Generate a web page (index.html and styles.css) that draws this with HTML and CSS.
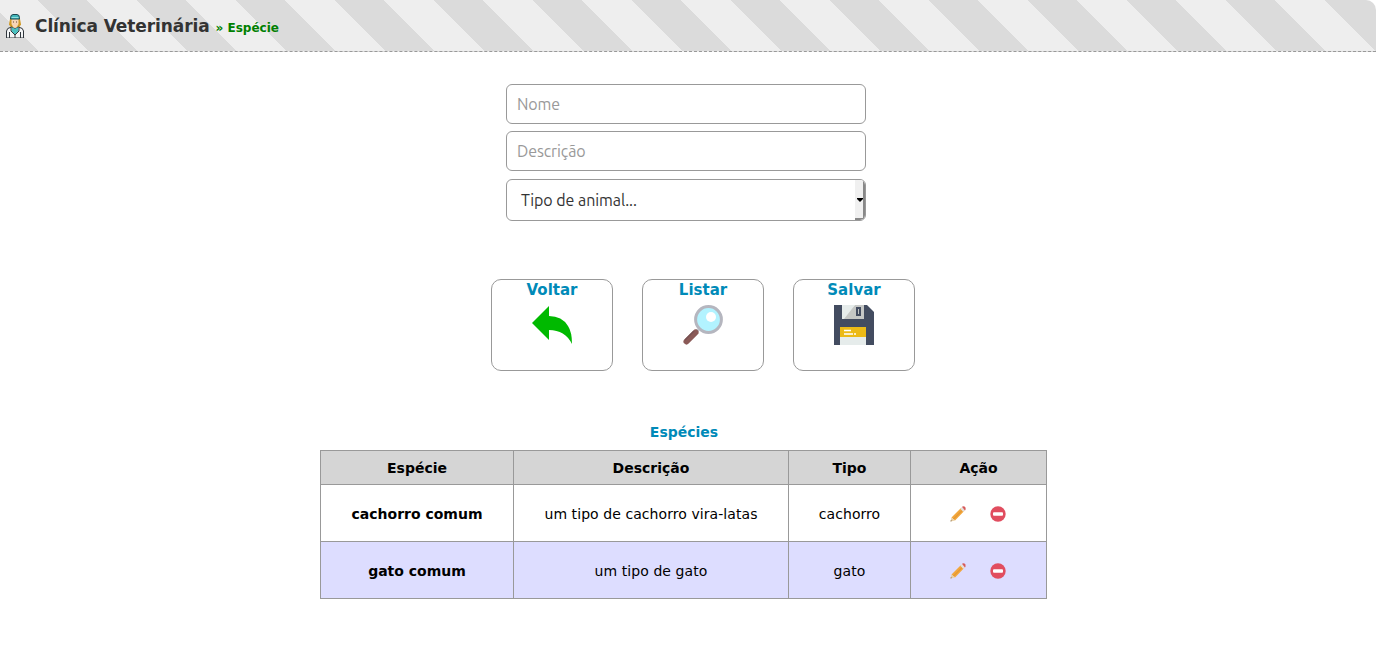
FILE: index.html
```html
<!DOCTYPE html>
<html lang="pt-BR">
<head>
<meta charset="utf-8">
<title>Clínica Veterinária</title>
<link rel="stylesheet" href="styles.css">
</head>
<body>
<svg class="sprites" aria-hidden="true">
  <symbol id="pencil" viewBox="0 0 16 16">
    <path d="M1.500 11.500L11 2l3.200 3L5 14.500z" fill="#f2a63b"/>
    <path d="M3.500 13l9.500-9.500" stroke="#dc9030" stroke-width="1"/>
    <path d="M.5 15.500l1-4 3.500 3z" fill="#e8cfa4"/>
    <path d="M.5 15.500l.4-1.600 1.200 1.200z" fill="#8b7355"/>
    <path d="M10.200 2.800l2-2 3.200 3.200-2 1.900z" fill="#e4e0dc"/>
    <path d="M12 .8Q13 0 14.500.5T15.500 3.800l-.6.700z" fill="#d75a5a"/>
  </symbol>
  <symbol id="remove" viewBox="0 0 16 16">
    <circle cx="8" cy="8" r="7.700" fill="#e14d5f"/>
    <rect x="3" y="6.300" width="10" height="3.400" rx="1" fill="#fff"/>
  </symbol>
</svg>
<header class="topbar">
  <svg class="doctor" width="18" height="24" viewBox="0 0 18 24">
    <path d="M4 5h10l1 5.500-2 3H5l-2-3z" fill="#d09a26"/>
    <path d="M5.500 5h7v5l-2 3.500h-3L5.500 10z" fill="#f7d5b5"/>
    <path d="M4.500 5L5 1.500 7 .5h4l2 1 .5 3.500z" fill="#3fb5b9" stroke="#1c4850"/>
    <path d="M5.500 3.500h7" stroke="#8de0dd"/>
    <path d="M.5 24v-7q0-3 5-4l3.500 2 3.500-2q5 1 5 4v7z" fill="#f3f5f6" stroke="#30363c"/>
    <path d="M5.500 13l3.500 2 3.500-2v4L9 21l-3.500-4z" fill="#49c0bf"/>
    <path d="M5 13v4l4 4 4-4v-4M9 21v3M3.500 18v6M14.500 18v6" fill="none" stroke="#30363c"/>
    <path d="M7 8h1M10 8h1" stroke="#624536"/>
  </svg>
  <h1 class="brand">Clínica Veterinária</h1>
  <span class="crumb">» Espécie</span>
</header>
<main class="page">
  <form class="fields">
    <input class="field" type="text" placeholder="Nome">
    <input class="field" type="text" placeholder="Descrição">
    <div class="picker" role="combobox" tabindex="0">
      <span class="picker-label">Tipo de animal...</span>
      <span class="picker-button"><svg width="6" height="4" viewBox="0 0 6 4"><path d="M0 0h6v1L3 4 0 1z"/></svg></span>
    </div>
  </form>
  <nav class="actions">
    <a class="action"><span>Voltar</span>
      <svg width="42" height="42" viewBox="0 0 42 42"><path d="M1 19L18 2v10q13 0 19 10 4 6 4 18Q34 26 18 26v10z" fill="#00b900"/></svg>
    </a>
    <a class="action"><span>Listar</span>
      <svg width="42" height="42" viewBox="0 0 42 42">
        <path d="M16 26l-3 3" stroke="#8f8790" stroke-width="3"/>
        <path d="M13.500 28.500L4.500 37.500" stroke="#8b5a57" stroke-width="6" stroke-linecap="round"/>
        <path d="M12 27L3 36" stroke="#765052" stroke-width="1.500"/>
        <circle cx="26.500" cy="15.500" r="12.900" fill="#b2f3ff" stroke="#b5b6bf" stroke-width="3"/>
        <circle cx="29" cy="13" r="5" fill="#fff"/>
      </svg>
    </a>
    <a class="action"><span>Salvar</span>
      <svg width="42" height="42" viewBox="0 0 42 42">
        <path d="M1 1h33l7 7v33H1z" fill="#434c60"/>
        <path d="M9 1h22v14H9z" fill="#c5c7c5"/>
        <path d="M9 1h13L9 14z" fill="#e6eceb"/>
        <path d="M9 15V10l9-9h4L11 15z" fill="#e6eceb"/>
        <path d="M24 4h3v7h-3z" fill="#bfc2c2" stroke="#434c60" stroke-width="2"/>
        <path d="M7 23h26v10H7z" fill="#ecba16"/>
        <path d="M7 33h26v8H7z" fill="#e6eceb"/>
        <path d="M11 26.500h7M11 30h9M21 30h2" stroke="#fff" stroke-width="1.500"/>
      </svg>
    </a>
  </nav>
  <table class="species">
    <caption>Espécies</caption>
    <colgroup><col class="c-name"><col class="c-desc"><col class="c-type"><col class="c-tools"></colgroup>
    <thead><tr><th>Espécie</th><th>Descrição</th><th>Tipo</th><th>Ação</th></tr></thead>
    <tbody>
      <tr><th>cachorro comum</th><td>um tipo de cachorro vira-latas</td><td>cachorro</td><td><div class="tools"><svg class="icon"><use href="#pencil"/></svg><svg class="icon"><use href="#remove"/></svg></div></td></tr>
      <tr><th>gato comum</th><td>um tipo de gato</td><td>gato</td><td><div class="tools"><svg class="icon"><use href="#pencil"/></svg><svg class="icon"><use href="#remove"/></svg></div></td></tr>
    </tbody>
  </table>
</main>
</body>
</html>
```
FILE: styles.css
```css
* { box-sizing: border-box; }
body {
  margin: 0;
  background: #fff;
  color: #000;
  font-family: Verdana, "DejaVu Sans", sans-serif;
  font-size: 14px;
}
.sprites { display: none; }
.topbar {
  display: flex;
  align-items: center;
  height: 52px;
  padding-left: 6px;
  border-bottom: 1px dashed #999;
  border-top-right-radius: 10px;
  background: repeating-linear-gradient(45deg, #dbdbdb 0 27.5px, #eee 27.5px 62.5px, #dbdbdb 62.5px 70px);
}
.doctor { flex: none; }
.brand {
  margin: 0 6px 0 11px;
  color: #333;
  font-size: 17px;
  line-height: 24px;
  letter-spacing: -0.1px;
}
.crumb {
  padding-top: 4px;
  color: green;
  font-size: 12px;
  font-weight: bold;
}
.page { padding-top: 32px; }
.fields {
  display: flex;
  flex-direction: column;
  width: 360px;
  margin-left: 506px;
}
.field, .picker {
  width: 360px;
  border: 1px solid #999;
  border-radius: 6px;
  background: #fff;
  font-family: Ubuntu, "Noto Sans", sans-serif;
  font-size: 16px;
}
.field {
  height: 40px;
  margin: 0 0 7px;
  padding: 0 10px;
  letter-spacing: -0.1px;
}
.field::placeholder { color: #999; opacity: 1; }
.picker {
  display: flex;
  justify-content: space-between;
  height: 42px;
  margin-top: 1px;
  padding-left: 14px;
  overflow: hidden;
  color: #333;
  line-height: 40px;
  letter-spacing: -0.05px;
}
.picker-button {
  display: flex;
  align-items: center;
  justify-content: flex-end;
  width: 10px;
  padding-top: 2px;
  border-right: 2px solid #888;
  border-bottom: 2px solid #888;
  background: #f0f0f0;
}
.actions {
  display: flex;
  gap: 29px;
  margin: 58px 0 0 491px;
}
.action {
  display: flex;
  flex-direction: column;
  align-items: center;
  width: 122px;
  height: 92px;
  border: 1px solid #999;
  border-radius: 10px;
  color: #008ab8;
  font-size: 15px;
  font-weight: bold;
  line-height: 20px;
}
.action svg { margin-top: 4px; }
.species {
  width: 727px;
  margin: 51px 0 0 320px;
  border-collapse: collapse;
  table-layout: fixed;
  text-align: center;
}
.species caption {
  height: 28px;
  padding-left: 1px;
  color: #008ab8;
  font-weight: bold;
  line-height: 20px;
}
.species th, .species td { padding: 0; border: 1px solid #999; }
.species thead tr { height: 34px; background: #d5d5d5; }
.species tbody tr { height: 57px; }
.species tbody th, .species tbody td { padding-top: 2px; }
.species tbody td { letter-spacing: 0.07px; }
.species tbody tr:nth-child(even) { background: #ddf; }
.c-name { width: 193px; }
.c-desc { width: 275px; }
.c-type { width: 122px; }
.c-tools { width: 136px; }
.tools { display: flex; gap: 24px; justify-content: center; padding-right: 2px; }
.icon { width: 16px; height: 16px; }
```
